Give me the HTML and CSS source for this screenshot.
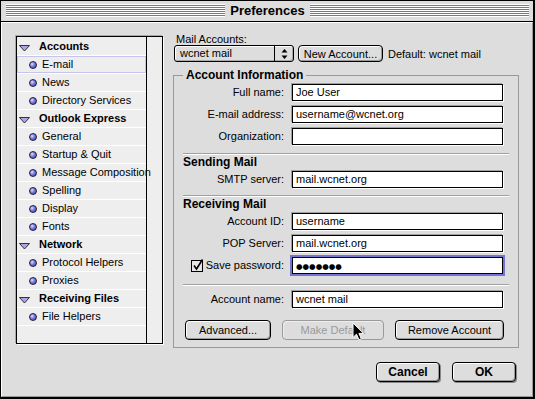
FILE: index.html
```html
<!DOCTYPE html>
<html>
<head>
<meta charset="utf-8">
<title>Preferences</title>
<link rel="stylesheet" href="styles.css">
</head>
<body>
<div class="window">
  <div class="titlebar">
    <div class="stripes"></div>
    <div class="title">Preferences</div>
    <div class="stripes"></div>
  </div>
  <div class="content">
    <div class="panes">
      <div class="sidebar">
        <ul class="list">
          <li class="row head"><svg class="tri" width="11" height="7" viewBox="0 0 11 7"><polygon points="0.5,0.5 10.5,0.5 5.5,6" fill="#a6a6f2" stroke="#333" stroke-width="1"/></svg>Accounts</li>
          <li class="row item sel"><span class="bullet"></span>E-mail</li>
          <li class="row item"><span class="bullet"></span>News</li>
          <li class="row item"><span class="bullet"></span>Directory Services</li>
          <li class="row head"><svg class="tri" width="11" height="7" viewBox="0 0 11 7"><polygon points="0.5,0.5 10.5,0.5 5.5,6" fill="#a6a6f2" stroke="#333" stroke-width="1"/></svg>Outlook Express</li>
          <li class="row item"><span class="bullet"></span>General</li>
          <li class="row item"><span class="bullet"></span>Startup &amp; Quit</li>
          <li class="row item"><span class="bullet"></span>Message Composition</li>
          <li class="row item"><span class="bullet"></span>Spelling</li>
          <li class="row item"><span class="bullet"></span>Display</li>
          <li class="row item"><span class="bullet"></span>Fonts</li>
          <li class="row head"><svg class="tri" width="11" height="7" viewBox="0 0 11 7"><polygon points="0.5,0.5 10.5,0.5 5.5,6" fill="#a6a6f2" stroke="#333" stroke-width="1"/></svg>Network</li>
          <li class="row item"><span class="bullet"></span>Protocol Helpers</li>
          <li class="row item"><span class="bullet"></span>Proxies</li>
          <li class="row head"><svg class="tri" width="11" height="7" viewBox="0 0 11 7"><polygon points="0.5,0.5 10.5,0.5 5.5,6" fill="#a6a6f2" stroke="#333" stroke-width="1"/></svg>Receiving Files</li>
          <li class="row item"><span class="bullet"></span>File Helpers</li>
        </ul>
        <div class="track"></div>
      </div>

      <div class="main">
        <div class="caption">Mail Accounts:</div>
        <div class="acctrow">
          <div class="popup">
            <span class="popup-text">wcnet mail</span>
            <span class="popup-arrows"><svg width="7" height="12" viewBox="0 0 7 12"><polygon points="3.5,1 0.5,4.5 6.5,4.5" fill="#000"/><polygon points="0.5,7.5 6.5,7.5 3.5,11" fill="#000"/></svg></span>
          </div>
          <div class="btn btn-new">New Account...</div>
          <span class="default">Default: wcnet mail</span>
        </div>

        <fieldset class="group">
          <legend>Account Information</legend>
          <div class="form">
            <div class="label">Full name:</div><div class="field">Joe User</div>
            <div class="label">E-mail address:</div><div class="field">username@wcnet.org</div>
            <div class="label">Organization:</div><div class="field"></div>
          </div>
          <div class="sep sep-1"></div>
          <div class="section">Sending Mail</div>
          <div class="form form-tight">
            <div class="label">SMTP server:</div><div class="field">mail.wcnet.org</div>
          </div>
          <div class="sep sep-2"></div>
          <div class="section">Receiving Mail</div>
          <div class="form form-tight">
            <div class="label">Account ID:</div><div class="field">username</div>
            <div class="label">POP Server:</div><div class="field">mail.wcnet.org</div>
            <div class="label check-label"><svg class="checkbox" width="13" height="13" viewBox="0 0 13 13"><rect x="0.5" y="1.5" width="11" height="11" fill="#e6e6e6" stroke="#000"/><path d="M3 6.5 L5.5 10 L11.5 0.5" fill="none" stroke="#000" stroke-width="1.6"/></svg><span>Save password:</span></div><div class="field field-focus"><span class="dots">●●●●●●●</span></div>
          </div>
          <div class="sep sep-3"></div>
          <div class="form form-last">
            <div class="label">Account name:</div><div class="field">wcnet mail</div>
          </div>
          <div class="actions">
            <div class="btn btn-adv">Advanced...</div>
            <div class="btn btn-def disabled">Make Default</div>
            <div class="btn btn-rem">Remove Account</div>
          </div>
        </fieldset>
      </div>
    </div>

    <div class="footer">
      <div class="btn btn-main">Cancel</div>
      <div class="btn btn-main">OK</div>
    </div>
  </div>

  <svg class="cursor" width="13" height="19" viewBox="0 0 13 19"><path d="M1 1 L1 15.5 L4.5 12.2 L7 17.8 L9.3 16.8 L6.9 11.4 L11.6 11.4 Z" fill="#000" stroke="#fff" stroke-width="1"/></svg>
</div>
</body>
</html>
```

FILE: styles.css
```css
* { box-sizing: border-box; margin: 0; padding: 0; }

html, body {
  width: 535px;
  height: 399px;
  overflow: hidden;
  background: #dddddd;
}

body {
  font-family: "Liberation Sans", Arial, sans-serif;
  font-size: 11px;
  color: #000;
}

.window {
  position: relative;
  width: 535px;
  height: 399px;
  border: 1px solid #000;
  border-right-width: 2px;
  border-bottom-width: 2px;
  background: #dddddd;
  display: flex;
  flex-direction: column;
}

/* ---- title bar ---- */
.titlebar {
  height: 21px;
  flex: none;
  border-bottom: 1px solid #000;
  display: flex;
  align-items: center;
  padding: 0 4px 1px 5px;
  background: #dddddd;
}

.stripes {
  flex: 1;
  height: 13px;
  background: repeating-linear-gradient(to bottom, #ffffff 0 1px, #7a7a7a 1px 2px);
  border-bottom: 1px solid #fff;
}

.title {
  font-weight: bold;
  font-size: 13px;
  line-height: 16px;
  padding: 0 5px;
}

/* ---- content ---- */
.content {
  flex: 1;
  border-top: 1px solid #fff;
  border-left: 1px solid #fff;
  border-right: 1px solid #9a9a9a;
  border-bottom: 1px solid #9a9a9a;
  padding: 10px 13px 0 14px;
  display: flex;
  flex-direction: column;
}

.panes {
  display: flex;
  gap: 10px;
  align-items: flex-start;
}

/* ---- sidebar ---- */
.sidebar {
  margin-top: 3px;
  width: 147px;
  height: 308px;
  border: 1px solid #000;
  background: #eeeeee;
  display: flex;
  box-shadow: 1px 1px 0 #fff, -1px -1px 0 #a8a8a8;
}

.list {
  list-style: none;
  width: 129px;
  padding-top: 1px;
}

.row {
  height: 18px;
  line-height: 17px;
  border-bottom: 1px solid #fff;
  display: flex;
  align-items: center;
  white-space: nowrap;
}

.head {
  font-weight: bold;
  padding-left: 2px;
}

.tri {
  margin-top: 4px;
  margin-right: 9px;
  flex: none;
}

.item {
  padding-left: 12px;
}

.item.sel {
  box-shadow: inset 0 0 0 1px #c4c4ee;
}

.bullet {
  width: 8px;
  height: 8px;
  flex: none;
  border-radius: 50%;
  border: 1px solid #1e1e3c;
  background: radial-gradient(circle at 35% 35%, #e0e0ff 0, #8080e0 40%, #3a3a96 100%);
  margin-right: 5px;
}

.track {
  flex: 1;
  border-left: 1px solid #000;
}

/* ---- main ---- */
.main {
  width: 346px;
}

.caption {
  line-height: 12px;
  padding-left: 3px;
}

.acctrow {
  display: flex;
  align-items: center;
  gap: 4px;
  height: 17px;
  padding-left: 1px;
}

.popup {
  width: 120px;
  height: 17px;
  border: 1px solid #000;
  border-radius: 3px;
  background: #dddddd;
  display: flex;
  box-shadow: inset 1px 1px 0 #fff, inset -1px -1px 0 #aaa;
}

.popup-text {
  flex: 1;
  padding-left: 5px;
  line-height: 15px;
}

.popup-arrows {
  width: 19px;
  border-left: 1px solid #000;
  display: flex;
  align-items: center;
  justify-content: center;
}

.btn {
  height: 17px;
  border: 1px solid #000;
  border-radius: 4px;
  background: #dddddd;
  box-shadow: inset 1px 1px 0 #fff, inset -1px -1px 0 #9a9a9a;
  display: flex;
  align-items: center;
  justify-content: center;
  white-space: nowrap;
}

.btn-new { width: 85px; }

.default { margin-left: 1px; }

/* ---- group box ---- */
.group {
  margin-top: 6px;
  border: 1px solid #999;
  padding: 2px 0 7px 0;
  min-width: 0;
}

.group legend {
  margin-left: 9px;
  padding: 0 3px;
  font-weight: bold;
  font-size: 12px;
  line-height: 14px;
}

.form {
  display: grid;
  grid-template-columns: 110px 211px;
  column-gap: 8px;
  row-gap: 5px;
  align-items: center;
}

.form-tight { margin-top: 2px; }
.form-last { margin-top: 5px; }

.label {
  text-align: right;
  line-height: 17px;
  white-space: nowrap;
}

.check-label {
  display: flex;
  justify-content: flex-end;
  align-items: center;
  gap: 2px;
}

.checkbox { flex: none; margin-top: -1px; }

.field {
  height: 17px;
  border: 1px solid #000;
  background: #fff;
  padding-left: 3px;
  line-height: 15px;
  box-shadow: -1px -1px 0 #a0a0a0, 1px 1px 0 #fff;
  white-space: nowrap;
}

.field-focus {
  box-shadow: 0 0 0 2px #7474d2;
}

.dots {
  font-family: "DejaVu Sans", sans-serif;
  font-size: 7.5px;
  letter-spacing: 0;
}

.sep {
  height: 2px;
  margin: 0 9px;
  border-top: 1px solid #a0a0a0;
  border-bottom: 1px solid #fff;
}

.sep-1 { margin-top: 8px; }
.sep-2 { margin-top: 7px; }
.sep-3 { margin-top: 10px; }

.section {
  font-weight: bold;
  font-size: 12px;
  line-height: 14px;
  padding-left: 9px;
}

.actions {
  display: flex;
  gap: 11px;
  margin: 12px 0 0 11px;
}

.actions .btn { height: 20px; }
.btn-adv { width: 86px; }
.btn-def { width: 102px; }
.btn-rem { width: 109px; }

.btn.disabled {
  color: #9a9a9a;
  border-color: #9a9a9a;
  box-shadow: inset 1px 1px 0 #eee;
}

/* ---- footer ---- */
.footer {
  display: flex;
  justify-content: flex-end;
  gap: 12px;
  margin-top: 14px;
  padding-right: 3px;
}

.btn-main {
  width: 64px;
  height: 20px;
  font-weight: bold;
  font-size: 12px;
  box-shadow: inset 1px 1px 0 #fff, inset -1px -1px 0 #9a9a9a, 1px 1px 0 #888;
}

/* ---- pointer over content ---- */
.cursor {
  position: absolute;
  left: 351px;
  top: 321px;
}
```
